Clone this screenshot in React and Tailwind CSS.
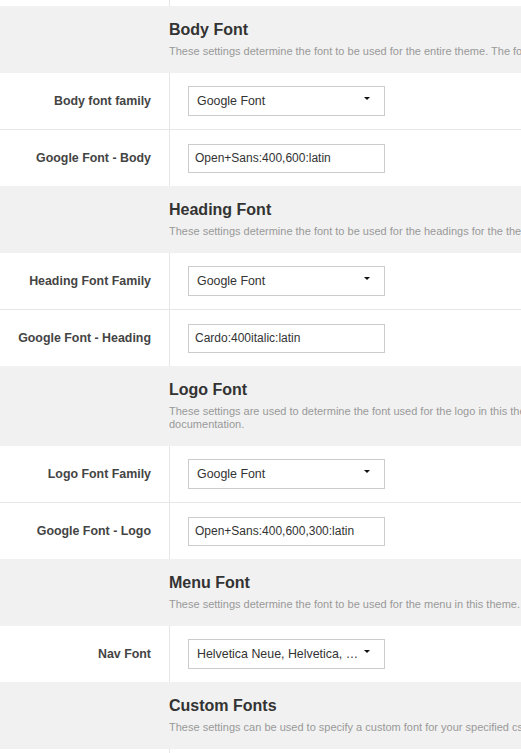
import React from 'react';

const sections = [
  {
    title: 'Body Font',
    desc: 'These settings determine the font to be used for the entire theme. The font family can be a Google font or a standard web font.',
    rows: [
      { label: 'Body font family', type: 'select', value: 'Google Font' },
      { label: 'Google Font - Body', type: 'input', value: 'Open+Sans:400,600:latin' },
    ],
  },
  {
    title: 'Heading Font',
    desc: 'These settings determine the font to be used for the headings for the theme.',
    rows: [
      { label: 'Heading Font Family', type: 'select', value: 'Google Font' },
      { label: 'Google Font - Heading', type: 'input', value: 'Cardo:400italic:latin' },
    ],
  },
  {
    title: 'Logo Font',
    desc: 'These settings are used to determine the font used for the logo in this theme. For more details please see the theme',
    desc2: 'documentation.',
    rows: [
      { label: 'Logo Font Family', type: 'select', value: 'Google Font' },
      { label: 'Google Font - Logo', type: 'input', value: 'Open+Sans:400,600,300:latin' },
    ],
  },
  {
    title: 'Menu Font',
    desc: 'These settings determine the font to be used for the menu in this theme. The font family can be a standard web font.',
    rows: [{ label: 'Nav Font', type: 'select', value: 'Helvetica Neue, Helvetica, …' }],
  },
  {
    title: 'Custom Fonts',
    desc: 'These settings can be used to specify a custom font for your specified css selectors.',
    rows: [],
  },
];

const SectionHeader = ({ title, desc, desc2 }) => (
  <div className="bg-[#f1f1f1] pl-[169px] pt-[14px] pb-[15px]">
    <h2 className="text-[16px] leading-[20px] font-bold text-[#333]">{title}</h2>
    <p className="mt-[5px] text-[11px] leading-[13px] text-[#999] whitespace-nowrap">
      {desc}
      {desc2 && <br />}
      {desc2}
    </p>
  </div>
);

const FieldRow = ({ label, type, value, last }) => (
  <div className={`flex h-[56px] bg-white ${last ? '' : 'border-b border-[#e6e6e6] box-content'}`}>
    <div className="w-[170px] shrink-0 border-r border-[#e6e6e6] flex items-center justify-end pr-[18px]">
      <span className="text-[12.4px] font-bold text-[#444] whitespace-nowrap">{label}</span>
    </div>
    <div className="flex items-center pl-[18px]">
      {type === 'select' ? (
        <div className="w-[197px] h-[30px] border border-[#cccccc] bg-white flex items-center justify-between pl-[8px] pr-[14px]">
          <span className="text-[12.4px] text-[#333] whitespace-nowrap">{value}</span>
          <span className="w-0 h-0 border-l-[3px] border-r-[3px] border-t-[3px] border-l-transparent border-r-transparent border-t-[#111] -mt-[5px]" />
        </div>
      ) : (
        <input
          readOnly
          value={value}
          className="w-[197px] h-[29px] border border-[#cccccc] bg-white px-[6px] text-[12px] text-[#333] outline-none"
        />
      )}
    </div>
  </div>
);

export default function App() {
  return (
    <div className="w-[521px] h-[753px] overflow-hidden bg-white" style={{ fontFamily: '"Liberation Sans", Arial, sans-serif' }}>
      <div className="w-[1000px]">
        <div className="flex h-[6px]">
          <div className="w-[170px] border-r border-[#e6e6e6]" />
        </div>
        {sections.map((s) => (
          <div key={s.title}>
            <SectionHeader title={s.title} desc={s.desc} desc2={s.desc2} />
            {s.rows.map((r, i) => (
              <FieldRow key={r.label} {...r} last={i === s.rows.length - 1} />
            ))}
          </div>
        ))}
        <div className="flex h-[40px]">
          <div className="w-[170px] border-r border-[#e6e6e6]" />
        </div>
      </div>
    </div>
  );
}
